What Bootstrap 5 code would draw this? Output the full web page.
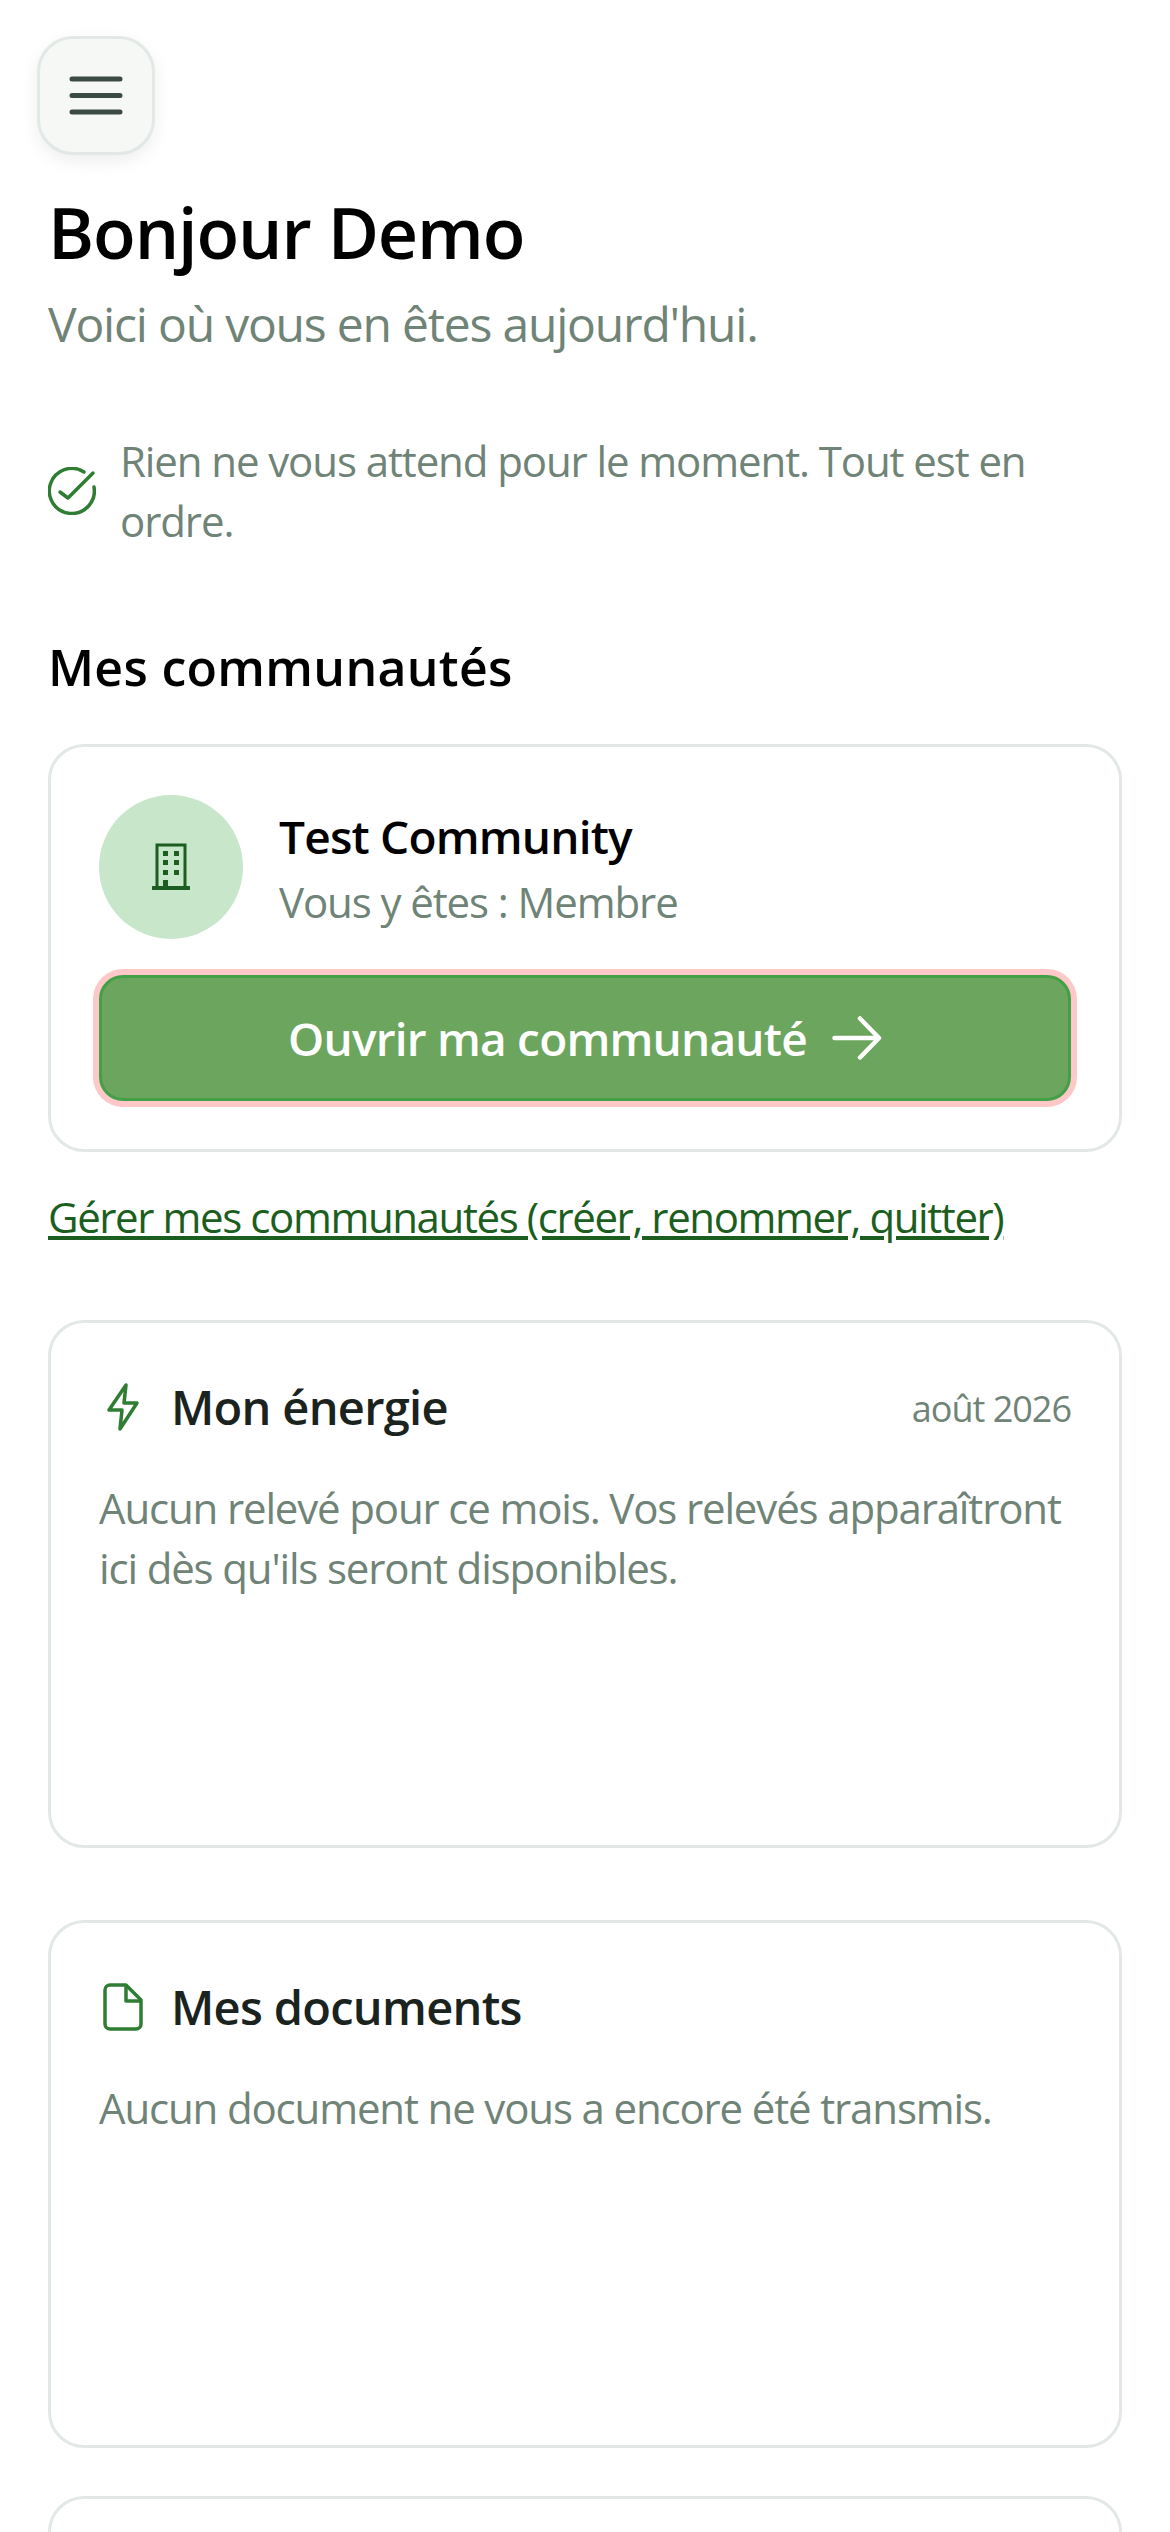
<!DOCTYPE html>
<html lang="fr">
<head>
  <meta charset="UTF-8">
  <meta name="viewport" content="width=device-width, initial-scale=1.0">
  <title>Tableau de bord</title>
  <link href="https://cdn.jsdelivr.net/npm/bootstrap@5.3.1/dist/css/bootstrap.min.css" rel="stylesheet">
  <style>
    body { font-family: "Open Sans", "Noto Sans", sans-serif; background: #fff; color: #1a231d; font-size: 42px; line-height: 60px; overflow: hidden; height: 2532px; }
    .page-wrap { padding: 36px 48px 0 48px; }
    .menu-btn { width: 118px; height: 119px; margin-left: -11px; background: #f6f8f6; border: 3px solid #e2e8e5; border-radius: 36px; box-shadow: 0 6px 18px rgba(0,0,0,.07); padding: 0; }
    .hello-title { font-size: 70px; line-height: 90px; font-weight: 600; letter-spacing: -1.1px; color: #000; margin: 32px 0 0; }
    .hello-sub { font-size: 48px; line-height: 66px; letter-spacing: -1.2px; color: #6f8377; margin: 14px 0 0; }
    .status-line { margin-top: 74px; color: #6f8377; font-size: 42px; line-height: 60px; letter-spacing: -1.1px; gap: 24px; }
    .section-title { font-size: 50px; line-height: 66px; font-weight: 600; letter-spacing: .3px; color: #000; margin: 83px 0 0; }
    .panel { border: 3px solid #e2e8e5; border-radius: 36px; background: #fff; padding: 48px; }
    .community-panel { height: 408px; margin-top: 44px; }
    .community-head { gap: 36px; }
    .avatar-round { width: 144px; height: 144px; background: #c8e6c9; }
    .community-name { font-size: 46px; line-height: 64px; font-weight: 600; letter-spacing: -.8px; color: #000; padding-top: 4px; }
    .community-role { font-size: 42px; line-height: 64px; letter-spacing: -1.1px; color: #6f8377; padding-top: 2px; }
    .open-btn { height: 126px; margin-top: 36px; background: #6ca55e; border: 3px solid #43a047; border-radius: 24px; box-shadow: 0 0 0 6px #ffc8c8; color: #fff; font-size: 46px; font-weight: 600; letter-spacing: -.8px; gap: 25px; }
    .open-btn:hover { background: #6ca55e; color: #fff; border-color: #43a047; }
    .manage-link { display: block; font-size: 42px; line-height: 60px; letter-spacing: -1.4px; color: #1b5e20; margin-top: 35px; }
    .info-panel { height: 528px; }
    .first-info { margin-top: 73px; }
    .second-info { margin-top: 72px; }
    .third-info { margin-top: 48px; }
    .panel-head { gap: 24px; height: 72px; }
    .panel-title { font-size: 47px; line-height: 66px; font-weight: 600; letter-spacing: -.7px; color: #1a231d; margin: 0; }
    .panel-date { font-size: 36px; letter-spacing: -1px; color: #6f8377; padding-top: 3px; }
    .panel-text { color: #6f8377; font-size: 42px; line-height: 60px; letter-spacing: -1.15px; margin: 35px 0 0; }
  </style>
</head>
<body>
  <div class="page-wrap">
    <button class="menu-btn d-flex align-items-center justify-content-center" type="button" aria-label="Menu">
      <svg width="54" height="39" viewBox="0 0 54 39"><path d="M3 3h48M3 19.500h48M3 36h48" stroke="#3c4a44" stroke-width="5" stroke-linecap="round" fill="none"/></svg>
    </button>

    <h1 class="hello-title">Bonjour Demo</h1>
    <p class="hello-sub">Voici où vous en êtes aujourd'hui.</p>

    <div class="status-line d-flex align-items-center">
      <svg class="flex-shrink-0" width="48" height="48" viewBox="0 0 48 48" fill="none" stroke="#2e7d32" stroke-width="3.500" stroke-linecap="round" stroke-linejoin="round"><path d="M36 5A22.500 22.500 0 1 0 46 20"/><path d="m12 25 8 6L45 6"/></svg>
      <div>Rien ne vous attend pour le moment. Tout est en ordre.</div>
    </div>

    <h2 class="section-title">Mes communautés</h2>

    <div class="panel community-panel">
      <div class="community-head d-flex align-items-center">
        <div class="avatar-round rounded-circle d-flex align-items-center justify-content-center flex-shrink-0">
          <svg width="38" height="48" viewBox="0 0 38 48"><path d="M5 45V2h28v43" fill="none" stroke="#1b5e20" stroke-width="3"/><path d="M1 45h36" stroke="#1b5e20" stroke-width="4" stroke-linecap="round"/><path d="M11 8h5v5h-5zM22 8h5v5h-5zM11 17h5v5h-5zM22 17h5v5h-5zM11 27h5v5h-5zM22 27h5v5h-5zM11 37h5v7h-5z" fill="#1b5e20"/></svg>
        </div>
        <div>
          <div class="community-name">Test Community</div>
          <div class="community-role">Vous y êtes : Membre</div>
        </div>
      </div>
      <a href="#" class="btn open-btn w-100 d-flex align-items-center justify-content-center">
        Ouvrir ma communauté
        <svg width="50" height="44" viewBox="0 0 50 44" fill="none" stroke="#fff" stroke-width="4.500" stroke-linecap="round" stroke-linejoin="round"><path d="M2.500 22h44M28 2.500 47 22 28 41.500"/></svg>
      </a>
    </div>

    <a href="#" class="manage-link">Gérer mes communautés (créer, renommer, quitter)</a>

    <div class="panel info-panel first-info">
      <div class="panel-head d-flex align-items-center">
        <svg class="flex-shrink-0" width="48" height="48" viewBox="0 0 48 48" fill="none" stroke="#2e7d32" stroke-width="3.500" stroke-linejoin="round"><path d="M27 2 10 27h13l-2 19 17-26H25z"/></svg>
        <h3 class="panel-title">Mon énergie</h3>
        <span class="panel-date ms-auto">août 2026</span>
      </div>
      <p class="panel-text">Aucun relevé pour ce mois. Vos relevés apparaîtront ici dès qu'ils seront disponibles.</p>
    </div>

    <div class="panel info-panel second-info">
      <div class="panel-head d-flex align-items-center">
        <svg class="flex-shrink-0" width="48" height="48" viewBox="0 0 48 48" fill="none" stroke="#2e7d32" stroke-width="3.500" stroke-linejoin="round"><path d="M11 2h16l15 15v24a5 5 0 0 1-5 5H11a5 5 0 0 1-5-5V7a5 5 0 0 1 5-5z"/><path d="M27 2v16h15"/></svg>
        <h3 class="panel-title">Mes documents</h3>
      </div>
      <p class="panel-text">Aucun document ne vous a encore été transmis.</p>
    </div>

    <div class="panel info-panel third-info"></div>
  </div>

  <script src="https://cdn.jsdelivr.net/npm/bootstrap@5.3.1/dist/js/bootstrap.bundle.min.js"></script>
</body>
</html>
